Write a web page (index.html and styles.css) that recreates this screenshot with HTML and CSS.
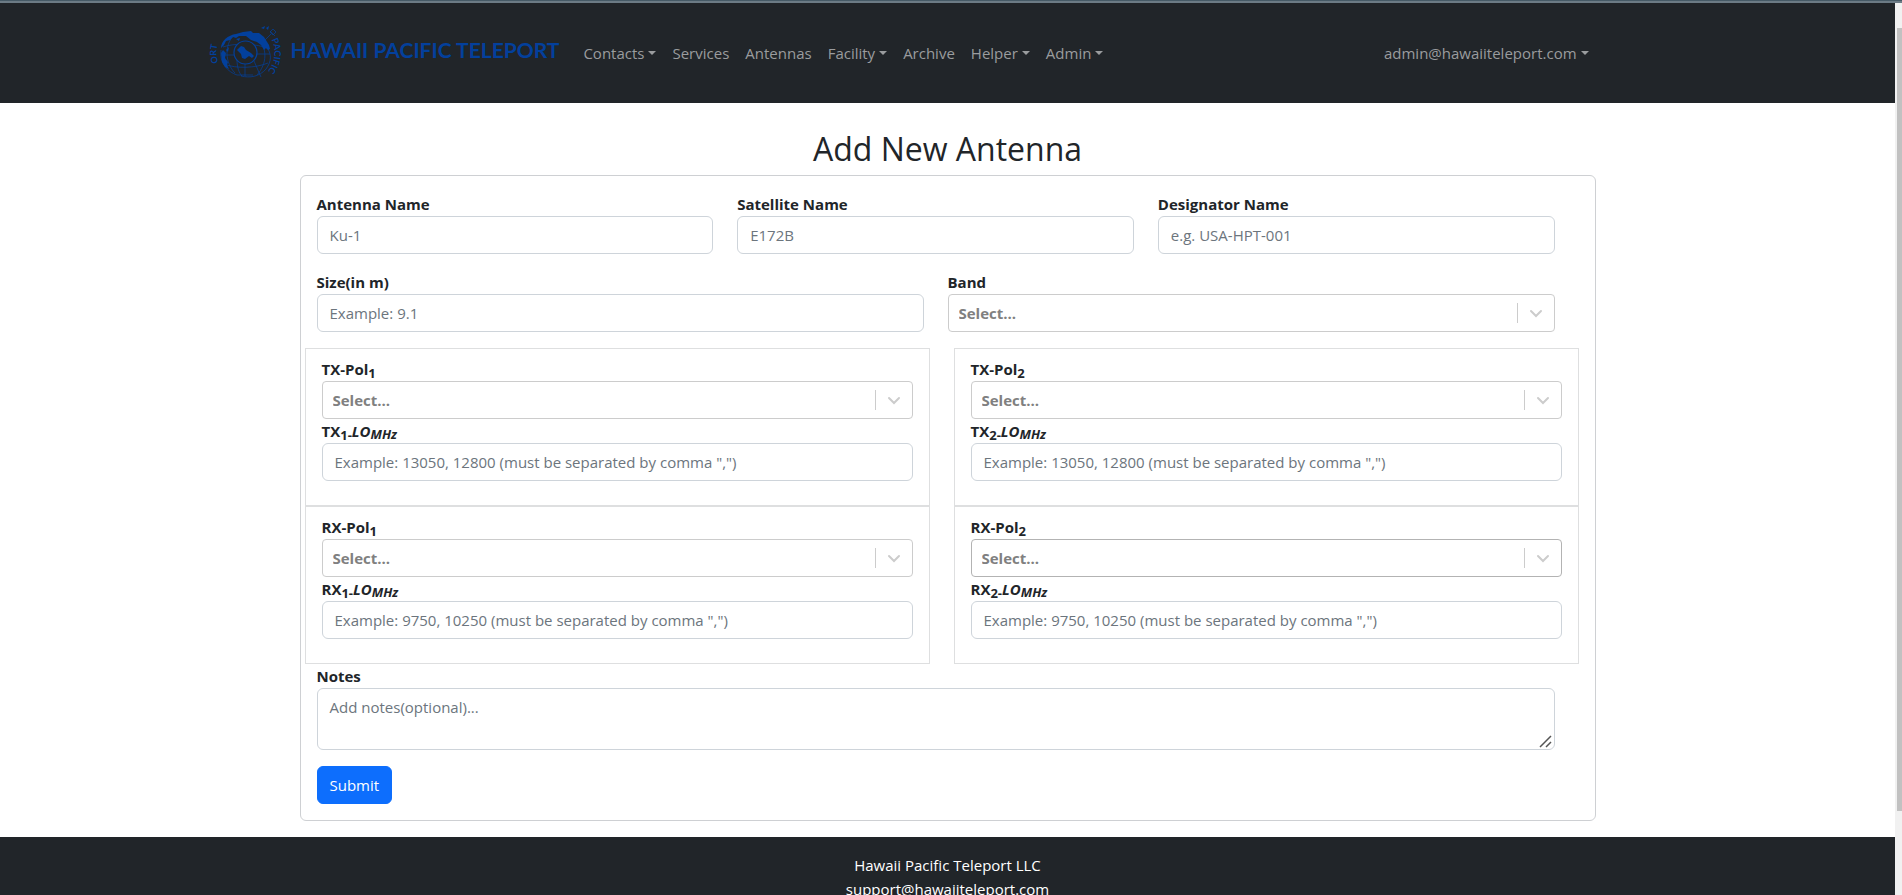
FILE: index.html
```html
<!DOCTYPE html>
<html lang="en">
<head>
<meta charset="utf-8">
<title>Add New Antenna</title>
<link rel="stylesheet" href="styles.css">
</head>
<body>
<div class="topline"></div>
<div class="viewport">
  <div class="page">
    <header class="navbar">
      <div class="navbar-inner">
        <a class="brand" href="#">
          <svg class="brand-logo" viewBox="0 0 76 60" aria-hidden="true">
            <defs>
              <path id="ring" d="M37.5 58.5A29 29 0 0 1 37.5 0.5A29 29 0 0 1 37.5 58.5"/>
            </defs>
            <g fill="none" stroke="#03409c" stroke-width="0.7">
              <path d="M13 27C11 40 20 49 29 52M33 53C42 55 51 54 58 46C64 38 63 31 60 26"/>
              <path d="M15 24C25 20 50 20 61 26M13 32H26M49 31H62M16 41C28 46 48 45 60 40M29 52H45M26 12C16 22 17 40 27 50M37 41V53M49 14C60 25 59 41 49 52M46 38L53 54M29 37C29 44 31 50 34 53"/>
              <path d="M57 17L63 11M62 8L67 13M65 6L68 9L65 12L62 9Z"/>
            </g>
            <circle cx="37.5" cy="29.5" r="11.5" fill="#212529" stroke="#03409c" stroke-width="1.2"/>
            <g fill="#03409c">
              <path d="M13 25C13 18 20 12 28 11L35 9L43 8L45 10L51 10L56 14L61 22L62 26L60 27L58 25L56 27L53 22L49 19L43 17L38 13L31 13L28 15L25 14L22 17L18 18L16 22Z"/>
              <path d="M13 30L15 27L18 30L17 35L20 39L19 42L21 46L17 44L14 39ZM28 16L32 15L31 18ZM18 27L21 24L20 29ZM53 5L57 3L56 6ZM58 5L61 3L60 7Z"/>
              <path d="M29 27L33 23L36 24L38 27L43 30L46 33L44 35L41 33L37 36L34 35L33 31Z"/>
            </g>
            <g class="ring-text">
              <text><textPath href="#ring" startOffset="123">PACIFIC</textPath></text>
              <text><textPath href="#ring" startOffset="35">ORT</textPath></text>
            </g>
          </svg>
          <span class="brand-name">HAWAII PACIFIC TELEPORT</span>
        </a>
        <nav class="nav">
          <a class="nav-link caret" href="#">Contacts</a>
          <a class="nav-link" href="#">Services</a>
          <a class="nav-link" href="#">Antennas</a>
          <a class="nav-link caret" href="#">Facility</a>
          <a class="nav-link" href="#">Archive</a>
          <a class="nav-link caret" href="#">Helper</a>
          <a class="nav-link caret" href="#">Admin</a>
        </nav>
        <a class="nav-link caret account" href="#">admin@hawaiiteleport.com</a>
      </div>
    </header>

    <main class="content">
      <h1 class="title">Add New Antenna</h1>
      <form class="card">
        <div class="row">
          <div class="field"><label for="antenna">Antenna Name</label><input class="control" id="antenna" type="text" placeholder="Ku-1"></div>
          <div class="field"><label for="satellite">Satellite Name</label><input class="control" id="satellite" type="text" placeholder="E172B"></div>
          <div class="field"><label for="designator">Designator Name</label><input class="control" id="designator" type="text" placeholder="e.g. USA-HPT-001"></div>
        </div>
        <div class="row">
          <div class="field"><label for="size">Size(in m)</label><input class="control" id="size" type="text" placeholder="Example: 9.1"></div>
          <div class="field"><label for="band">Band</label>
            <div class="select"><select id="band"><option>Select...</option></select><span class="indicator"><svg viewBox="0 0 20 20"><path d="M5 8L10 13L15 8"/></svg></span></div>
          </div>
        </div>
        <div class="groups">
          <fieldset class="group">
            <label for="txpol1">TX-Pol<sub>1</sub></label>
            <div class="select"><select id="txpol1"><option>Select...</option></select><span class="indicator"><svg viewBox="0 0 20 20"><path d="M5 8L10 13L15 8"/></svg></span></div>
            <label for="txlo1">TX<sub>1-</sub><i>LO<sub>MHz</sub></i></label>
            <input class="control" id="txlo1" type="text" placeholder='Example: 13050, 12800 (must be separated by comma ",")'>
          </fieldset>
          <fieldset class="group">
            <label for="txpol2">TX-Pol<sub>2</sub></label>
            <div class="select"><select id="txpol2"><option>Select...</option></select><span class="indicator"><svg viewBox="0 0 20 20"><path d="M5 8L10 13L15 8"/></svg></span></div>
            <label for="txlo2">TX<sub>2-</sub><i>LO<sub>MHz</sub></i></label>
            <input class="control" id="txlo2" type="text" placeholder='Example: 13050, 12800 (must be separated by comma ",")'>
          </fieldset>
          <fieldset class="group">
            <label for="rxpol1">RX-Pol<sub>1</sub></label>
            <div class="select"><select id="rxpol1"><option>Select...</option></select><span class="indicator"><svg viewBox="0 0 20 20"><path d="M5 8L10 13L15 8"/></svg></span></div>
            <label for="rxlo1">RX<sub>1-</sub><i>LO<sub>MHz</sub></i></label>
            <input class="control" id="rxlo1" type="text" placeholder='Example: 9750, 10250 (must be separated by comma ",")'>
          </fieldset>
          <fieldset class="group">
            <label for="rxpol2">RX-Pol<sub>2</sub></label>
            <div class="select hovered"><select id="rxpol2"><option>Select...</option></select><span class="indicator"><svg viewBox="0 0 20 20"><path d="M5 8L10 13L15 8"/></svg></span></div>
            <label for="rxlo2">RX<sub>2-</sub><i>LO<sub>MHz</sub></i></label>
            <input class="control" id="rxlo2" type="text" placeholder='Example: 9750, 10250 (must be separated by comma ",")'>
          </fieldset>
        </div>
        <div class="field notes"><label for="notes">Notes</label><textarea class="control" id="notes" rows="2" placeholder="Add notes(optional)..."></textarea></div>
        <button class="submit" type="submit">Submit</button>
      </form>
    </main>

    <footer class="footer">
      <div>Hawaii Pacific Teleport LLC</div>
      <div>support@hawaiiteleport.com</div>
    </footer>
  </div>
  <div class="scrollbar"><div class="thumb"></div></div>
</div>
</body>
</html>
```

FILE: styles.css
```css
*, *::before, *::after { box-sizing: border-box; }

body {
  margin: 0;
  height: 100vh;
  display: flex;
  flex-direction: column;
  overflow: hidden;
  background: #fff;
  color: #212529;
  font: 15px/24px "Open Sans", "Noto Sans", sans-serif;
}

.topline {
  flex: none;
  height: 3px;
  background: #6c7b85;
  border-top: 1px solid #465a66;
}

.viewport { flex: 1; min-height: 0; display: flex; }
.page { flex: 1; min-width: 0; overflow: hidden; }

.scrollbar { flex: none; width: 7px; padding: 25px 0 84px 2px; background: #f1f1f1; }
.thumb { height: 100%; background: #c1c1c1; }

.navbar { background: #212529; }
.navbar-inner {
  display: flex;
  align-items: center;
  width: 78%;
  height: 100px;
  margin: 0 auto;
  padding-right: 90px;
}
.brand { display: flex; align-items: center; margin-right: 16px; text-decoration: none; }
.brand-logo { width: 76px; height: 60px; margin-right: 6px; overflow: visible; }
.brand-name { color: #03409c; font: 700 21px/24px Lato, sans-serif; padding-bottom: 6px; white-space: nowrap; }
.ring-text { fill: #03409c; font: 700 9px Lato, sans-serif; }
.nav { display: flex; }
.nav-link { padding: 8px; color: #9a9c9e; text-decoration: none; white-space: nowrap; }
.caret::after {
  content: "";
  display: inline-block;
  margin-left: 4px;
  vertical-align: 4px;
  border: 4px solid transparent;
  border-top-color: currentColor;
  border-bottom: 0;
}
.account { margin-left: auto; }

.content { max-width: 1320px; margin: 0 auto; padding: 24px 12px 16px; }
.title { margin: 0 0 4px; font-size: 32px; line-height: 44px; font-weight: 500; text-align: center; }

.card { padding: 16px 40px 16px 16px; border: 1px solid #ced0d3; border-radius: 6px; }
.row { display: flex; gap: 24px; margin-bottom: 16px; }
.field { flex: 1; min-width: 0; }
label { display: block; height: 24px; font-weight: 700; }
sub { font-size: 13px; line-height: 0; vertical-align: -3px; }
i sub { vertical-align: -2px; }

.control {
  display: block;
  width: 100%;
  padding: 6px 12px;
  border: 1px solid #ced4da;
  border-radius: 6px;
  background: #fff;
  color: #212529;
  font: inherit;
}
.control::placeholder { color: #6c757d; opacity: 1; }
textarea.control::-webkit-resizer {
  background: url("data:image/svg+xml,%3Csvg xmlns='http://www.w3.org/2000/svg' width='15' height='15'%3E%3Cpath d='M1 13L12 2M7 13L12 8' fill='none' stroke='%23555' stroke-width='1.5'/%3E%3C/svg%3E") no-repeat right bottom;
}

.select {
  display: grid;
  height: 38px;
  border: 1px solid #ccc;
  border-radius: 4px;
}
.select.hovered { border-color: #b3b3b3; }
.select select {
  grid-area: 1 / 1;
  width: 100%;
  padding: 0 46px 0 10px;
  border: 0;
  background: transparent;
  color: #808080;
  font: inherit;
  font-weight: 700;
  appearance: none;
}
.indicator {
  grid-area: 1 / 1;
  justify-self: end;
  align-self: center;
  padding: 0 8px;
  height: 20px;
  border-left: 1px solid #ccc;
  pointer-events: none;
}
.indicator svg { display: block; width: 20px; height: 20px; fill: none; stroke: #ccc; stroke-width: 2; stroke-linecap: round; }

.groups { display: grid; grid-template-columns: 1fr 1fr; column-gap: 24px; margin: 0 -24px 0 -12px; }
.group { min-width: 0; margin: 0; padding: 8px 16px 24px; border: 1px solid #dedfe0; }
.notes { margin-bottom: 16px; }

.submit {
  display: block;
  padding: 6px 12px;
  border: 1px solid #0d6efd;
  border-radius: 6px;
  background: #0d6efd;
  color: #fff;
  font: inherit;
}

.footer { padding: 16px; background: #212529; color: #fff; text-align: center; }
```
